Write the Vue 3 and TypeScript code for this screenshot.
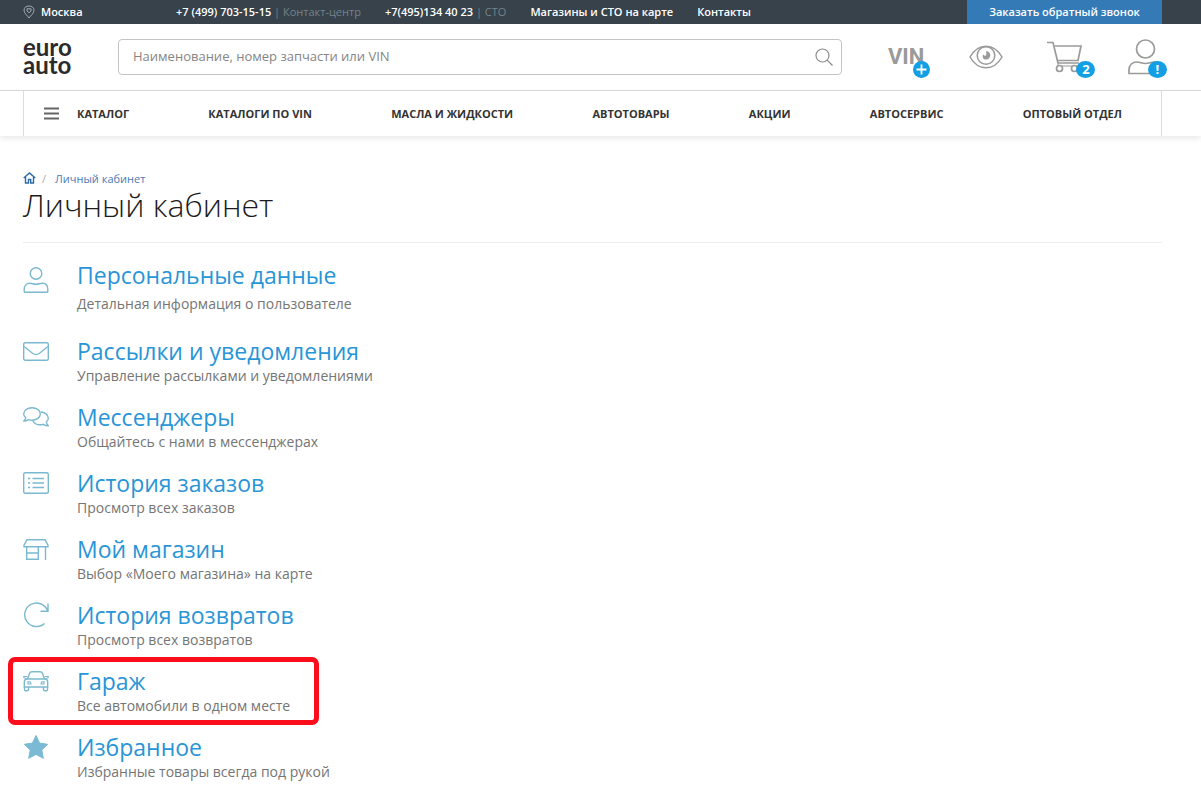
<script setup lang="ts">
interface Section {
  id: string
  title: string
  text: string
  marked?: boolean
}

const navItems: string[] = [
  'Каталоги по VIN',
  'Масла и жидкости',
  'Автотовары',
  'Акции',
  'Автосервис',
  'Оптовый отдел',
]

const sections: Section[] = [
  { id: 'user', title: 'Персональные данные', text: 'Детальная информация о пользователе' },
  { id: 'mail', title: 'Рассылки и уведомления', text: 'Управление рассылками и уведомлениями' },
  { id: 'chat', title: 'Мессенджеры', text: 'Общайтесь с нами в мессенджерах' },
  { id: 'list', title: 'История заказов', text: 'Просмотр всех заказов' },
  { id: 'shop', title: 'Мой магазин', text: 'Выбор «Моего магазина» на карте' },
  { id: 'return', title: 'История возвратов', text: 'Просмотр всех возвратов' },
  { id: 'car', title: 'Гараж', text: 'Все автомобили в одном месте', marked: true },
  { id: 'star', title: 'Избранное', text: 'Избранные товары всегда под рукой' },
]
</script>

<template>
  <div class="page">
    <div class="topbar">
      <a href="#" class="city">
        <svg width="12" height="14" viewBox="0 0 12 14" fill="none" stroke="#a3abb0" aria-hidden="true">
          <path d="M6 13C4.500 10.500 1 8.500 1 5.200C1 2.600 3.200 1 6 1s5 1.600 5 4.200C11 8.500 7.500 10.500 6 13z" />
          <path d="M4 3.800h4v2.200L6 7.800 4 6z" />
        </svg>
        <span>Москва</span>
      </a>
      <div class="toplinks">
        <span><a href="#">+7 (499) 703-15-15</a> <span class="muted">| Контакт-центр</span></span>
        <span><a href="#">+7(495)134 40 23</a> <span class="muted">| СТО</span></span>
        <a href="#">Магазины и СТО на карте</a>
        <a href="#">Контакты</a>
      </div>
      <button type="button" class="callback">Заказать обратный звонок</button>
    </div>

    <header class="header">
      <a href="#" class="logo">euro<br />auto</a>
      <form class="search" @submit.prevent>
        <input type="text" aria-label="Поиск" placeholder="Наименование, номер запчасти или VIN" />
        <button type="submit" aria-label="Найти">
          <svg width="20" height="20" viewBox="0 0 20 20" fill="none" stroke="#8c8c8c" stroke-width="1.200">
            <circle cx="8.500" cy="8.500" r="6.500" />
            <path d="M13.200 13.200l5.300 5.300" />
          </svg>
        </button>
      </form>
      <div class="actions">
        <button type="button" class="action vin" aria-label="VIN">
          <span class="vin-text">VIN</span>
          <span class="badge round">
            <svg width="17" height="17" viewBox="0 0 17 17" stroke="#fff" stroke-width="1.800"><path d="M8.500 3.500v10M3.500 8.500h10" /></svg>
          </span>
        </button>
        <button type="button" class="action" aria-label="Просмотренные">
          <svg width="34" height="24" viewBox="0 0 34 24" fill="none" stroke="#9a9a9a" stroke-width="1.500">
            <path d="M1 12C5 5 10.500 1.200 17 1.200S29 5 33 12c-4 7-9.500 10.800-16 10.800S5 19 1 12z" />
            <circle cx="17" cy="10.500" r="8.800" />
            <path d="M17.300 6v4l-1.300 1-2-1.500c-1 3 .5 5 3 5s4.300-1.700 4.300-4.300c0-2.200-1.500-3.800-4-4.200z" fill="#9a9a9a" stroke="none" />
          </svg>
        </button>
        <button type="button" class="action cart" aria-label="Корзина">
          <svg width="36" height="32" viewBox="0 0 36 32" fill="none" stroke="#9a9a9a" stroke-width="1.700">
            <path d="M0 1.500h6L11 22" />
            <path d="M7.500 5H34l-3 14.500H10.300M10.600 22H32" />
            <circle cx="12.500" cy="27.500" r="3" />
            <circle cx="27.500" cy="27.500" r="3" />
            <path d="M11 22v3M15 25h10" stroke-width="1" />
          </svg>
          <span class="badge">2</span>
        </button>
        <button type="button" class="action person" aria-label="Личный кабинет">
          <svg width="34" height="36" viewBox="0 0 34 36" fill="none" stroke="#9a9a9a" stroke-width="1.700">
            <circle cx="17.500" cy="10" r="9" />
            <path d="M1 34.500v-3c0-6 3.500-8.500 8-8.500 3 0 5 1.500 8.500 1.500S23 23 26 23c4.500 0 7 3 7 8.500v3z" />
          </svg>
          <span class="badge">!</span>
        </button>
      </div>
    </header>

    <div class="navwrap">
      <nav class="nav">
        <a href="#" class="catalog">
          <svg width="15" height="13" viewBox="0 0 15 13" stroke="#666" stroke-width="2" aria-hidden="true">
            <path d="M0 1.500h15M0 6.500h15M0 11.500h15" />
          </svg>
          <span>Каталог</span>
        </a>
        <a v-for="item in navItems" :key="item" href="#">{{ item }}</a>
      </nav>
    </div>

    <main class="content">
      <div class="crumbs">
        <a href="#" class="home" aria-label="Главная">
          <svg width="13" height="12" viewBox="0 0 13 12" fill="none" stroke="#2d6ba8" stroke-width="1.400">
            <path d="M.7 6L6.500 1l5.800 5M2.500 5v6h3V7.500h2.200V11h2.800V5" />
          </svg>
        </a>
        <span class="slash">/</span>
        <a href="#">Личный кабинет</a>
      </div>
      <h1>Личный кабинет</h1>

      <ul class="sections">
        <li v-for="s in sections" :key="s.id" :class="{ marked: s.marked, first: s.id === 'user' }">
          <svg class="icon" width="26" height="26" viewBox="0 0 26 26" fill="none" stroke="#7bb9d0" stroke-width="1.400" aria-hidden="true">
            <template v-if="s.id === 'user'">
              <circle cx="13" cy="6.500" r="5.800" />
              <path d="M2 25.300c-.5 0-.8-.3-.8-.8v-2c0-4 2.300-6.200 5.500-6.200 2.300 0 3.800 1 6.300 1s4-1 6.300-1c3.200 0 5.500 2.200 5.500 6.200v2c0 .5-.3.800-.8.800z" />
            </template>
            <template v-else-if="s.id === 'mail'">
              <rect x=".7" y="4.700" width="24.600" height="17.600" rx="1.500" />
              <path d="M1 8.500c3 2.500 6 4.700 8.500 6.700 2.500 1.900 4.500 1.900 7 0C19 13.200 22 11 25 8.500" />
            </template>
            <template v-else-if="s.id === 'chat'">
              <path d="M9 3.700c4.600 0 8.300 2.700 8.300 6.200s-3.700 6.300-8.300 6.300c-1.300 0-2.500-.2-3.500-.6-1.300.9-2.900 1.400-4.600 1.400 1-1 1.700-2.200 1.900-3.300C1.500 12.600.7 11.300.7 9.900c0-3.500 3.700-6.200 8.300-6.200z" />
              <path d="M17.500 8c4.400.2 7.800 2.800 7.800 6.200 0 1.400-.8 2.700-2 3.800.2 1.200.9 2.600 2 3.800-1.800 0-3.500-.6-4.900-1.500-1 .3-2.100.5-3.300.5-3.300 0-6.200-1.800-7.500-4.600" />
            </template>
            <template v-else-if="s.id === 'list'">
              <rect x=".7" y="2.700" width="24.600" height="20.600" rx="1.500" />
              <path d="M9.500 8.500H21M9.500 13H21M9.500 17.500H21M5 8.500h2.200M5 13h2.200M5 17.500h2.200" stroke-width="1.700" />
            </template>
            <template v-else-if="s.id === 'shop'">
              <path d="M4 3.700h18l3 5.500v1.500H1V9.200z" />
              <path d="M3.700 11v12.300h11.600V11M3.700 17h11.600M22.500 11v13" />
            </template>
            <template v-else-if="s.id === 'return'">
              <path d="M21.500 21.500A11.800 11.800 0 1 1 24.500 8.500M25 1.500v7.700h-7.500" />
            </template>
            <template v-else-if="s.id === 'car'">
              <path d="M4.500 11l2-5.500c.5-1.200 1.200-1.700 2.500-1.700h8c1.300 0 2 .5 2.500 1.700l2 5.500" />
              <path d="M4.300 8.500H.8v1.200l2.700 1M21.700 8.500h3.500v1.200l-2.700 1" stroke-width="1.200" />
              <path d="M4.500 11h17c2 0 3.200 1.300 3.200 3v5H1.300v-5c0-1.700 1.200-3 3.200-3z" />
              <path d="M1.500 19v2.500c0 .8.500 1.200 1.200 1.200h1.600c.7 0 1.200-.4 1.200-1.200V19M20.500 19v2.500c0 .8.500 1.200 1.200 1.200h1.600c.7 0 1.200-.4 1.200-1.200V19" />
              <path d="M5 13.500c2 0 3 1 3 2.500H5zM21 13.500c-2 0-3 1-3 2.500h3z" stroke-width="1.100" />
            </template>
            <template v-else>
              <path d="M13 1.500l3.600 7.600 8 1.200-5.800 5.800 1.500 8.200L13 20.400l-7.300 3.900 1.500-8.200-5.800-5.800 8-1.200z" fill="#7bbad5" stroke="#7bbad5" stroke-width="1" />
            </template>
          </svg>
          <div class="info">
            <a href="#">{{ s.title }}</a>
            <p>{{ s.text }}</p>
          </div>
        </li>
      </ul>
    </main>
  </div>
</template>

<style>
body {
  margin: 0;
  background: #fff;
}
</style>

<style scoped>
.page {
  font-family: "Open Sans", "Noto Sans", sans-serif;
  color: #333;
}
a {
  color: inherit;
  text-decoration: none;
}
button {
  font: inherit;
  border: 0;
  padding: 0;
  background: none;
  cursor: pointer;
}
svg {
  display: block;
}
.topbar,
.header,
.navwrap,
.content {
  padding: 0 39px 0 23px;
}
.topbar {
  display: flex;
  align-items: stretch;
  height: 24px;
  background: #37424a;
  color: #fff;
  font-size: 11px;
  font-weight: 600;
  line-height: 24px;
  white-space: nowrap;
}
.city {
  display: flex;
  align-items: center;
  gap: 6px;
  width: 153px;
}
.toplinks {
  display: flex;
  gap: 24px;
  flex: 1;
}
.muted {
  color: #75828a;
  font-weight: 400;
}
.callback {
  width: 195px;
  background: #337ab7;
  color: #fff;
}
.header {
  display: flex;
  align-items: center;
  height: 66px;
  border-bottom: 1px solid #ddd;
}
.logo {
  width: 95px;
  font-family: Lato, sans-serif;
  font-size: 24px;
  font-weight: 700;
  line-height: 18px;
  color: #2b2b2b;
  padding-bottom: 2px;
}
.search {
  display: flex;
  align-items: center;
  flex: 1;
  height: 34px;
  border: 1px solid #c4c4c4;
  border-radius: 4px;
}
.search input {
  flex: 1;
  min-width: 0;
  height: 32px;
  padding: 0 14px 2px;
  border: 0;
  outline: 0;
  background: none;
  font: 13px "Open Sans", "Noto Sans", sans-serif;
}
.search input::placeholder {
  color: #858585;
}
.search button {
  padding: 0 7px;
}
.actions {
  display: flex;
  align-items: center;
  justify-content: space-between;
  width: 274px;
  margin-left: 46px;
}
.action {
  position: relative;
  color: #9a9a9a;
}
.vin-text {
  font-family: "Liberation Sans Narrow", Roboto, sans-serif;
  font-size: 22px;
  font-weight: 700;
  line-height: 36px;
}
.badge {
  position: absolute;
  right: -12px;
  bottom: -5px;
  width: 19px;
  height: 17px;
  border-radius: 50%;
  background: #139fe4;
  color: #fff;
  font-size: 13px;
  font-weight: 700;
  line-height: 17px;
  text-align: center;
}
.person .badge {
  right: -5px;
  bottom: -3px;
}
.badge.round {
  right: -6px;
  bottom: -3px;
  width: 17px;
}
.navwrap {
  box-shadow: 0 2px 6px rgba(0, 0, 0, 0.1);
}
.nav {
  display: flex;
  align-items: center;
  justify-content: space-between;
  height: 45px;
  padding: 0 39px 0 20px;
  border: 1px solid #ddd;
  border-width: 0 1px;
  font-size: 11px;
  font-weight: 700;
  text-transform: uppercase;
  white-space: nowrap;
}
.catalog {
  display: flex;
  align-items: center;
  gap: 18px;
}
.content {
  padding-top: 34px;
}
.crumbs {
  display: flex;
  align-items: center;
  height: 16px;
  font-size: 11px;
  color: #4a7ab5;
}
.slash {
  padding: 0 9px 0 6px;
  color: #aaa;
}
h1 {
  margin: 0;
  padding-bottom: 18px;
  border-bottom: 1px solid #eee;
  color: #1c1c1c;
  font-size: 32px;
  font-weight: 300;
  line-height: 38px;
}
.sections {
  list-style: none;
  margin: 0;
  padding: 12px 0 0;
}
.sections li {
  display: flex;
  gap: 28px;
  width: max-content;
  height: 66px;
  position: relative;
}
.sections .icon {
  margin-top: 7px;
}
.sections .first .icon {
  margin-top: 12px;
}
.info {
  padding-top: 6px;
}
.info a {
  display: block;
  color: #2a95d6;
  font-size: 23px;
  line-height: 28px;
}
.info p {
  margin: 0;
  color: #757575;
  font-size: 14px;
  line-height: 22px;
}
.sections .first {
  height: 76px;
}
.first p {
  padding-top: 4px;
}
.marked::after {
  content: "";
  position: absolute;
  inset: -4px -29px 2px -15px;
  border: 5px solid #fb0d1b;
  border-radius: 7px;
  pointer-events: none;
}
</style>
